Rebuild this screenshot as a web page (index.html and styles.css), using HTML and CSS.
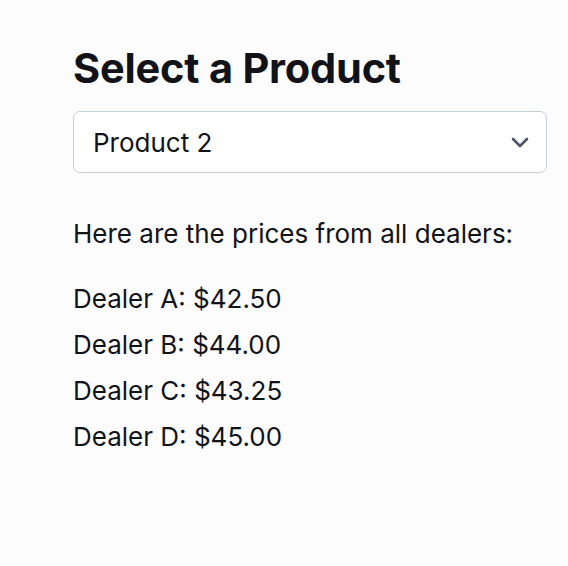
FILE: index.html
```html
<!DOCTYPE html>
<html lang="en">
<head>
<meta charset="utf-8">
<title>Select a Product</title>
<link rel="stylesheet" href="styles.css">
</head>
<body>
<main class="page">
  <h1 class="title">Select a Product</h1>
  <div class="select">
    <span class="select-value">Product 2</span>
    <svg class="chevron" width="18" height="11" viewBox="0 0 18 11" aria-hidden="true"><path d="M2 2l7 7 7-7" fill="none" stroke="#4b5563" stroke-width="2.6" stroke-linecap="round" stroke-linejoin="round"/></svg>
  </div>
  <p class="intro">Here are the prices from all dealers:</p>
  <ul class="prices">
    <li>Dealer A: $42.50</li>
    <li>Dealer B: $44.00</li>
    <li>Dealer C: $43.25</li>
    <li>Dealer D: $45.00</li>
  </ul>
</main>
</body>
</html>
```
FILE: styles.css
```css
html, body {
  margin: 0;
  background: #fcfcfc;
}
body {
  font-family: Inter, "Noto Sans", sans-serif;
  color: #111318;
}
.page {
  padding: 40px 21px 0 73px;
}
.title {
  margin: 0;
  font-size: 41.5px;
  font-weight: 700;
  line-height: 56px;
  letter-spacing: -0.2px;
}
.select {
  margin-top: 15px;
  height: 60px;
  border: 1px solid #c9cfd8;
  border-radius: 7px;
  background: #ffffff;
  display: flex;
  align-items: center;
  justify-content: space-between;
  padding: 0 17px 0 19px;
}
.select-value {
  font-size: 26px;
}
.intro {
  margin: 44px 0 0;
  font-size: 26px;
  line-height: 34px;
}
.prices {
  list-style: none;
  margin: 25px 0 0;
  padding: 0;
  font-size: 26px;
  line-height: 46px;
}
```
